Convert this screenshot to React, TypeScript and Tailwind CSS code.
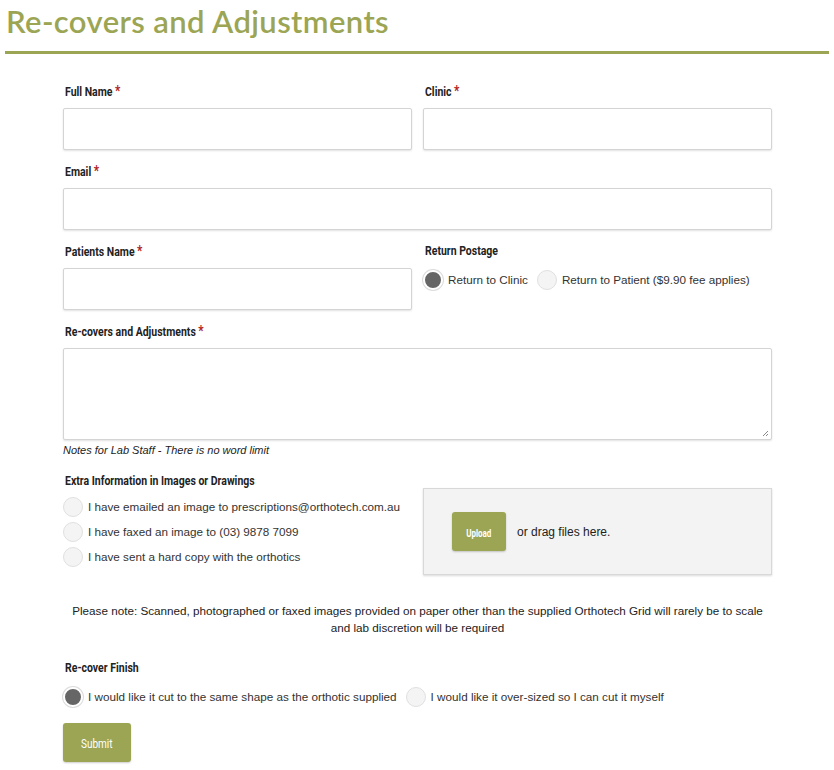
import React from "react";

type FieldProps = {
    label: string;
    required?: boolean;
    children: React.ReactNode;
};

const Label = ({ label, required }: { label: string; required?: boolean }) => (
    <div className="h-[18px] mb-2 flex items-center pl-[2px]">
        <span className="inline-block origin-left scale-x-[0.84] whitespace-nowrap text-[12.5px] font-bold text-[#222] [font-family:'Roboto',sans-serif]">
            {label}
            {required && <span className="text-[#b01c1c] text-[14px] ml-[3px]">*</span>}
        </span>
    </div>
);

const Field = ({ label, required, children }: FieldProps) => (
    <div className="mb-3">
        <Label label={label} required={required} />
        {children}
    </div>
);

const Input = () => (
    <div className="h-[42px] bg-white border border-[#d4d4d4] rounded-[2px] shadow-[0_1px_2px_rgba(0,0,0,0.12)]" />
);

const Radio = ({ checked, text }: { checked?: boolean; text: string }) => (
    <label className="flex items-center gap-[5px]">
        <span
            className={
                checked
                    ? "w-[20px] h-[20px] rounded-full bg-[#666] border-[2px] border-white shadow-[0_0_0_1px_#dcdcdc] shrink-0"
                    : "w-[20px] h-[20px] rounded-full bg-[#f4f4f4] border border-[#e0e0e0] shrink-0"
            }
        />
        <span className="text-[11.7px] text-[#333] [font-family:'Liberation_Sans',Arial,sans-serif]">{text}</span>
    </label>
);

export default function App() {
    return (
        <div className="w-[834px] min-h-[770px] bg-white [font-family:'Liberation_Sans',Arial,sans-serif]">
            <div className="pl-[6px] pr-[5px] pt-[1px]">
                <h1 className="text-[31px] leading-[40px] font-semibold text-[#9ba553] [font-family:'Lato','Open_Sans',sans-serif] tracking-[0.4px]">
                    Re-covers and Adjustments
                </h1>
                <div className="mt-[10px] h-[3px] bg-[#9ba553] -ml-[1px]" />
            </div>

            <form className="ml-[63px] w-[709px] pt-[28px]">
                <div className="grid grid-cols-2 gap-x-[11px]">
                    <Field label="Full Name" required>
                        <Input />
                    </Field>
                    <Field label="Clinic" required>
                        <Input />
                    </Field>
                </div>

                <Field label="Email" required>
                    <Input />
                </Field>

                <div className="grid grid-cols-2 gap-x-[11px]">
                    <Field label="Patients Name" required>
                        <Input />
                    </Field>
                    <div className="mb-3">
                        <Label label="Return Postage" />
                        <div className="flex items-center gap-[9px] pt-[2px]">
                            <Radio checked text="Return to Clinic" />
                            <Radio text="Return to Patient ($9.90 fee applies)" />
                        </div>
                    </div>
                </div>

                <div className="mb-[15px]">
                    <Label label="Re-covers and Adjustments" required />
                    <div className="relative h-[92px] bg-white border border-[#d4d4d4] rounded-[2px] shadow-[0_1px_2px_rgba(0,0,0,0.12)]">
                        <svg className="absolute right-[2px] bottom-[2px]" width="7" height="7" viewBox="0 0 7 7">
                            <path d="M6 1 L1 6 M6 4 L4 6" stroke="#888" strokeWidth="1" />
                        </svg>
                    </div>
                    <p className="mt-[3px] text-[11px] italic text-[#222] leading-[14px]">
                        Notes for Lab Staff - There is no word limit
                    </p>
                </div>

                <div className="grid grid-cols-2 gap-x-[11px]">
                    <div>
                        <Label label="Extra Information in Images or Drawings" />
                        <div className="flex flex-col gap-[5px] -mt-[1px]">
                            <Radio text="I have emailed an image to prescriptions@orthotech.com.au" />
                            <Radio text="I have faxed an image to (03) 9878 7099" />
                            <Radio text="I have sent a hard copy with the orthotics" />
                        </div>
                    </div>
                    <div className="pt-[16px]">
                        <div className="h-[87px] bg-[#f3f3f3] border border-[#d8d8d8] shadow-[0_1px_2px_rgba(0,0,0,0.15)] flex items-center pl-[28px] gap-[11px]">
                            <button
                                type="button"
                                className="w-[54px] h-[39px] rounded-[3px] bg-[#9ba553] text-white shadow-[0_1px_2px_rgba(0,0,0,0.2)]"
                            >
                                <span className="inline-block scale-x-[0.8] text-[10px] font-bold [font-family:'Roboto',sans-serif]">Upload</span>
                            </button>
                            <span className="text-[12px] text-[#222]">or drag files here.</span>
                        </div>
                    </div>
                </div>

                <p className="mt-[27px] text-center text-[11.7px] leading-[17px] text-[#222] px-[4px]">
                    Please note: Scanned, photographed or faxed images provided on paper other than the supplied Orthotech Grid will rarely be to scale
                    and lab discretion will be required
                </p>

                <div className="mt-[23px]">
                    <Label label="Re-cover Finish" />
                    <div className="flex items-center gap-[9px] pt-[2px]">
                        <Radio checked text="I would like it cut to the same shape as the orthotic supplied" />
                        <Radio text="I would like it over-sized so I can cut it myself" />
                    </div>
                </div>

                <button
                    type="button"
                    className="mt-[16px] w-[68px] h-[39px] rounded-[3px] bg-[#9ba553] text-white shadow-[0_1px_2px_rgba(0,0,0,0.2)]"
                >
                    <span className="inline-block scale-x-[0.8] text-[12.5px] [font-family:'Roboto',sans-serif]">Submit</span>
                </button>
            </form>
        </div>
    );
}
